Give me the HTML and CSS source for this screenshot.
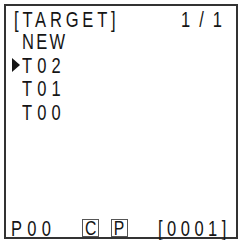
FILE: index.html
```html
<!DOCTYPE html>
<html lang="en">
<head>
  <meta charset="UTF-8" />
  <title>Target</title>
  <link rel="stylesheet" href="styles.css">
</head>
<body>
  <div class="screen">
    <div class="header">
      <div class="title"><span class="lcd">[TARGET]</span></div>
      <div class="page"><span class="lcd">1/1</span></div>
    </div>
    <ul class="list">
      <li class="new"><span class="lcd">NEW</span></li>
      <li class="selected"><span class="lcd">T02</span></li>
      <li><span class="lcd">T01</span></li>
      <li><span class="lcd">T00</span></li>
    </ul>
    <div class="footer">
      <div class="prog"><span class="lcd">P00</span></div>
      <div class="flag"><span class="lcd">C</span></div>
      <div class="flag"><span class="lcd">P</span></div>
      <div class="count"><span class="lcd">[0001]</span></div>
    </div>
  </div>
</body>
</html>
```

FILE: styles.css
```css
body {
  margin: 0;
  background: #fff;
  color: #151515;
  font-family: 'Liberation Sans', Arial, sans-serif;
}

.screen {
  margin: 4px;
  width: 230px;
  height: 231px;
  border: 2px solid #333;
  display: flex;
  flex-direction: column;
  font-size: 22px;
}

/* narrow LCD-style glyphs */
.lcd {
  display: inline-block;
  white-space: nowrap;
  transform: scaleX(0.75);
  transform-origin: 0 50%;
}

.header {
  display: flex;
  padding: 3px 0 0 8px;
  line-height: 21px;
}

.title {
  flex: 1;
  min-width: 0;
  letter-spacing: 5.1px;
}

.page {
  width: 55px;
  letter-spacing: 12px;
}

.page .lcd {
  margin-right: -17px;
}

.list {
  list-style: none;
  margin: 0;
  padding: 0 0 0 16px;
  line-height: 23.5px;
  letter-spacing: 6.8px;
}

.list li {
  position: relative;
}

.list .new {
  letter-spacing: 3.1px;
}

.list .selected::before {
  content: '';
  position: absolute;
  left: -10px;
  top: 4.5px;
  border-left: 8px solid #151515;
  border-top: 7px solid transparent;
  border-bottom: 7px solid transparent;
}

.footer {
  margin-top: auto;
  display: flex;
  align-items: flex-end;
  padding-left: 5px;
  font-size: 22px;
  line-height: 17px;
}

.footer > div {
  flex: none;
}

.prog {
  width: 71px;
  letter-spacing: 7px;
}

.flag {
  width: 15px;
  height: 16px;
  font-size: 21px;
  line-height: 16px;
  border: 1px solid #555;
  text-align: center;
  margin-right: 12px;
}

.flag .lcd {
  transform-origin: 50% 50%;
}

.flag + .flag {
  margin-right: 0;
}

.count {
  margin-left: 30px;
  letter-spacing: 6px;
}

.count .lcd {
  margin-right: -24px;
}
```
